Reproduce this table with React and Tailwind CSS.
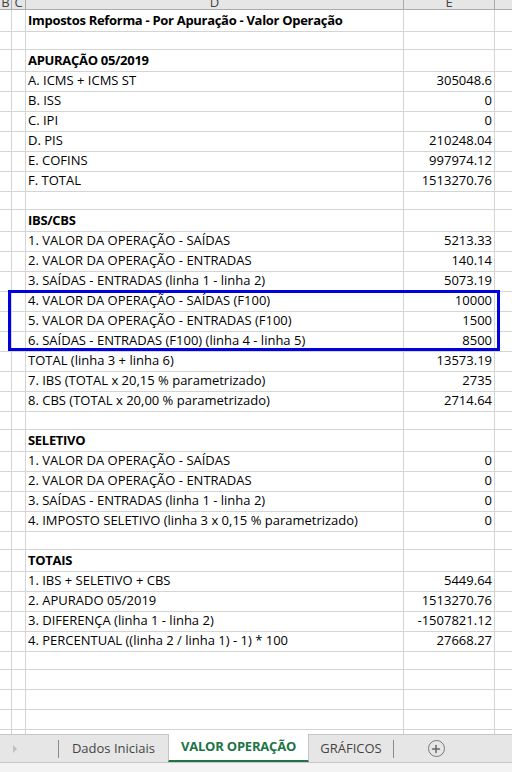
import { Plus } from "lucide-react";

const rows = [
  { label: "Impostos Reforma - Por Apuração - Valor Operação", bold: true },
  {},
  { label: "APURAÇÃO 05/2019", bold: true },
  { label: "A. ICMS + ICMS ST", value: "305048.6" },
  { label: "B. ISS", value: "0" },
  { label: "C. IPI", value: "0" },
  { label: "D. PIS", value: "210248.04" },
  { label: "E. COFINS", value: "997974.12" },
  { label: "F. TOTAL", value: "1513270.76" },
  {},
  { label: "IBS/CBS", bold: true },
  { label: "1. VALOR DA OPERAÇÃO - SAÍDAS", value: "5213.33" },
  { label: "2. VALOR DA OPERAÇÃO - ENTRADAS", value: "140.14" },
  { label: "3. SAÍDAS - ENTRADAS (linha 1 - linha 2)", value: "5073.19" },
  { label: "4. VALOR DA OPERAÇÃO - SAÍDAS (F100)", value: "10000" },
  { label: "5. VALOR DA OPERAÇÃO - ENTRADAS (F100)", value: "1500" },
  { label: "6. SAÍDAS - ENTRADAS (F100) (linha 4 - linha 5)", value: "8500" },
  { label: "TOTAL (linha 3 + linha 6)", value: "13573.19" },
  { label: "7. IBS (TOTAL x 20,15 % parametrizado)", value: "2735" },
  { label: "8. CBS (TOTAL x 20,00 % parametrizado)", value: "2714.64" },
  {},
  { label: "SELETIVO", bold: true },
  { label: "1. VALOR DA OPERAÇÃO - SAÍDAS", value: "0" },
  { label: "2. VALOR DA OPERAÇÃO - ENTRADAS", value: "0" },
  { label: "3. SAÍDAS - ENTRADAS (linha 1 - linha 2)", value: "0" },
  { label: "4. IMPOSTO SELETIVO (linha 3 x 0,15 % parametrizado)", value: "0" },
  {},
  { label: "TOTAIS", bold: true },
  { label: "1. IBS + SELETIVO + CBS", value: "5449.64" },
  { label: "2. APURADO 05/2019", value: "1513270.76" },
  { label: "3. DIFERENÇA (linha 1 - linha 2)", value: "-1507821.12" },
  { label: "4. PERCENTUAL ((linha 2 / linha 1) - 1) * 100", value: "27668.27" },
  {},
  {},
  {},
  {},
  {},
];

const cols = "grid grid-cols-[12px_14px_378px_91px_17px]";

export default function App() {
  return (
    <div
      className="w-[512px] h-[772px] overflow-hidden bg-white flex flex-col text-black"
      style={{ fontFamily: "'Open Sans', 'Noto Sans', sans-serif" }}
    >
      {/* sheet */}
      <div className="relative h-[734px] overflow-hidden">
        {/* column header, scrolled so only its lower part shows */}
        <div className={`${cols} h-[10px] bg-[#e6e6e6] border-b border-[#ababab] text-[13px] leading-none text-[#444] overflow-hidden`}>
          <div className="border-r border-[#ababab] flex justify-center items-end -mt-[4px]">B</div>
          <div className="border-r border-[#ababab] flex justify-center items-end -mt-[4px]">C</div>
          <div className="border-r border-[#ababab] flex justify-center items-end -mt-[4px]">D</div>
          <div className="border-r border-[#ababab] flex justify-center items-end -mt-[4px]">E</div>
          <div />
        </div>

        {rows.map((r, i) => (
          <div key={i} className={`${cols} h-[20px] text-[13px]`}>
            <div className="border-r border-b border-[#d4d4d4]" />
            <div className="border-r border-b border-[#d4d4d4]" />
            <div
              className={`border-r border-b border-[#d4d4d4] pl-[2px] pt-px flex items-center whitespace-nowrap ${
                r.bold ? "font-bold tracking-[-0.3px]" : ""
              }`}
            >
              {r.label}
            </div>
            <div className="border-r border-b border-[#d4d4d4] pr-[2px] pt-px flex items-center justify-end whitespace-nowrap">
              {r.value}
            </div>
            <div className="border-b border-[#d4d4d4]" />
          </div>
        ))}

        {/* selection box around the F100 rows */}
        <div className="absolute left-[8px] top-[290px] w-[492px] h-[61px] border-[3px] border-[#0000e0] pointer-events-none" />
      </div>

      {/* sheet tabs */}
      <div className="h-[28px] bg-[#e6e6e6] border-t border-[#c6c6c6] flex items-stretch text-[13px] text-[#444]">
        <div className="w-[58px] flex items-center pl-[13px]">
          <span className="w-0 h-0 border-y-[4px] border-y-transparent border-l-[4px] border-l-[#c0c0c0]" />
        </div>
        <div className="flex items-center">
          <div className="w-px h-[18px] bg-[#8a8a8a]" />
        </div>
        <div className="w-[109px] flex items-center justify-center">Dados Iniciais</div>
        <div className="w-[141px] bg-white border-x border-[#c6c6c6] -mt-px flex items-center justify-center font-bold tracking-[-0.2px] text-[#217346] border-b-2 border-b-[#217346]">
          VALOR OPERAÇÃO
        </div>
        <div className="w-[84px] flex items-center justify-center">GRÁFICOS</div>
        <div className="flex items-center">
          <div className="w-px h-[18px] bg-[#8a8a8a]" />
        </div>
        <div className="w-[84px] flex items-center justify-center">
          <span className="w-[17px] h-[17px] rounded-full border border-[#777] flex items-center justify-center">
            <Plus className="w-[12px] h-[12px] text-[#666]" strokeWidth={3} />
          </span>
        </div>
      </div>
      <div className="flex-1 bg-[#f3f3f3] border-t border-[#c6c6c6]" />
    </div>
  );
}
